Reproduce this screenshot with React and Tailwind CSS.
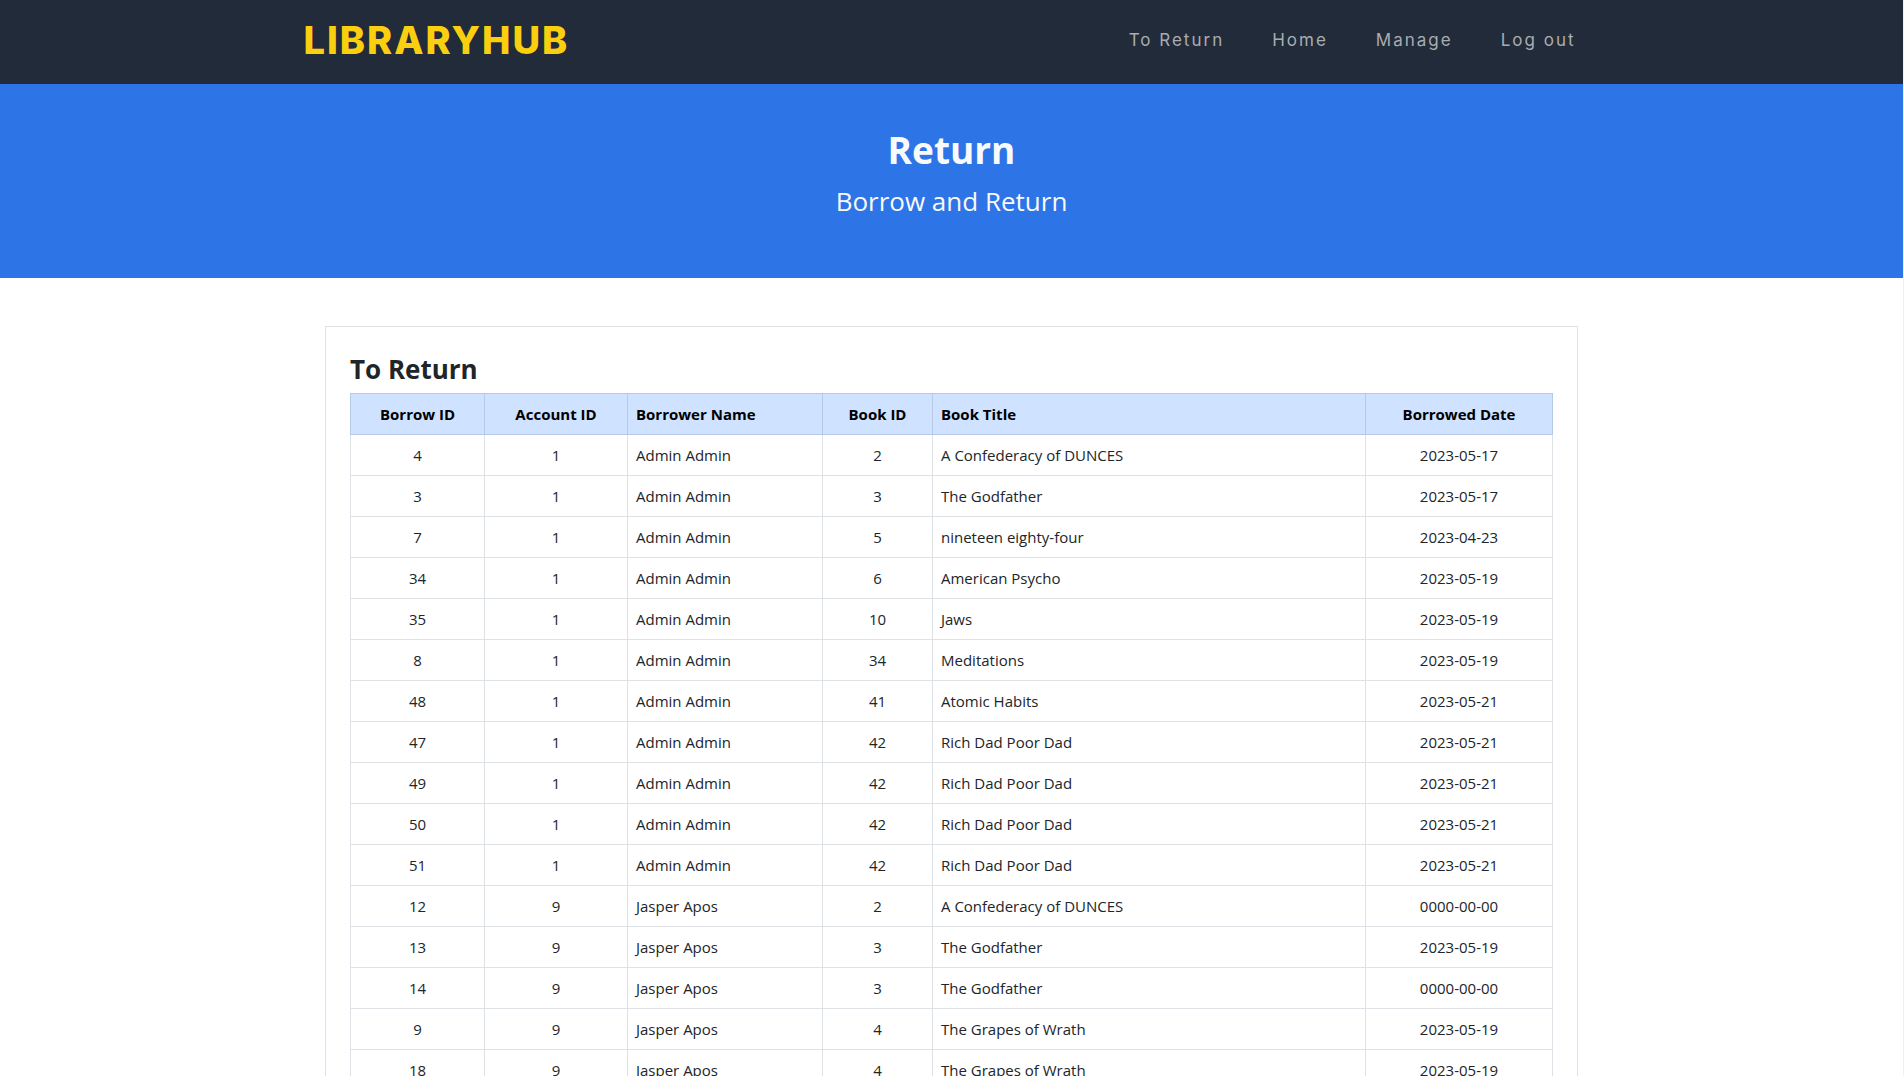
const links = ["To Return", "Home", "Manage", "Log out"];

const columns = [
  { label: "Borrow ID", width: "w-[134px]", center: true },
  { label: "Account ID", width: "w-[143px]", center: true },
  { label: "Borrower Name", width: "w-[195px]", center: false },
  { label: "Book ID", width: "w-[110px]", center: true },
  { label: "Book Title", width: "", center: false },
  { label: "Borrowed Date", width: "w-[187px]", center: true },
];

const rows = [
  [4, 1, "Admin Admin", 2, "A Confederacy of DUNCES", "2023-05-17"],
  [3, 1, "Admin Admin", 3, "The Godfather", "2023-05-17"],
  [7, 1, "Admin Admin", 5, "nineteen eighty-four", "2023-04-23"],
  [34, 1, "Admin Admin", 6, "American Psycho", "2023-05-19"],
  [35, 1, "Admin Admin", 10, "Jaws", "2023-05-19"],
  [8, 1, "Admin Admin", 34, "Meditations", "2023-05-19"],
  [48, 1, "Admin Admin", 41, "Atomic Habits", "2023-05-21"],
  [47, 1, "Admin Admin", 42, "Rich Dad Poor Dad", "2023-05-21"],
  [49, 1, "Admin Admin", 42, "Rich Dad Poor Dad", "2023-05-21"],
  [50, 1, "Admin Admin", 42, "Rich Dad Poor Dad", "2023-05-21"],
  [51, 1, "Admin Admin", 42, "Rich Dad Poor Dad", "2023-05-21"],
  [12, 9, "Jasper Apos", 2, "A Confederacy of DUNCES", "0000-00-00"],
  [13, 9, "Jasper Apos", 3, "The Godfather", "2023-05-19"],
  [14, 9, "Jasper Apos", 3, "The Godfather", "0000-00-00"],
  [9, 9, "Jasper Apos", 4, "The Grapes of Wrath", "2023-05-19"],
  [18, 9, "Jasper Apos", 4, "The Grapes of Wrath", "2023-05-19"],
];

function Navbar() {
  return (
    <header className="bg-[#222b39] font-['Inter',sans-serif]">
      <div className="mx-auto flex max-w-[1320px] items-center justify-between pt-2.5 pr-9 pb-3.5 pl-3">
        <a href="#" className="text-[38px] leading-[60px] font-extrabold tracking-[2px] text-[#facf0f]">
          LIBRARYHUB
        </a>
        <nav className="flex gap-12">
          {links.map((link) => (
            <a key={link} href="#" className="text-[17px] leading-6 tracking-[2px] text-[#a9acb0]">
              {link}
            </a>
          ))}
        </nav>
      </div>
    </header>
  );
}

export default function App() {
  return (
    <div className="min-h-screen border-r border-[#f0f0f0] bg-white font-['Open_Sans','Noto_Sans',sans-serif] text-[#212529]">
      <Navbar />
      <section className="bg-[#2d74e7] pt-[42px] pb-14 text-center text-[#f8f9fa]">
        <h1 className="text-[37px] leading-12 font-bold">Return</h1>
        <p className="mt-1.5 text-[26px] leading-[42px]">Borrow and Return</p>
      </section>
      <main className="mx-auto mt-12 max-w-[1253px] border border-[#dee2e6] px-6 pt-[25px] pb-6">
        <h2 className="pb-[7px] text-[26px] leading-[34px] font-bold">To Return</h2>
        <table className="w-full table-fixed border-collapse text-[15px] leading-6">
          <thead>
            <tr className="bg-[#cfe2ff] text-black">
              {columns.map((c) => (
                <th
                  key={c.label}
                  scope="col"
                  className={`border border-[#b6c9e8] p-2 font-bold ${c.width} ${c.center ? "text-center" : "text-left"}`}
                >
                  {c.label}
                </th>
              ))}
            </tr>
          </thead>
          <tbody>
            {rows.map((row) => (
              <tr key={row[0]}>
                {row.map((cell, i) => (
                  <td key={i} className={`border border-[#dee2e6] p-2 ${columns[i].center ? "text-center" : ""}`}>
                    {cell}
                  </td>
                ))}
              </tr>
            ))}
          </tbody>
        </table>
      </main>
    </div>
  );
}
